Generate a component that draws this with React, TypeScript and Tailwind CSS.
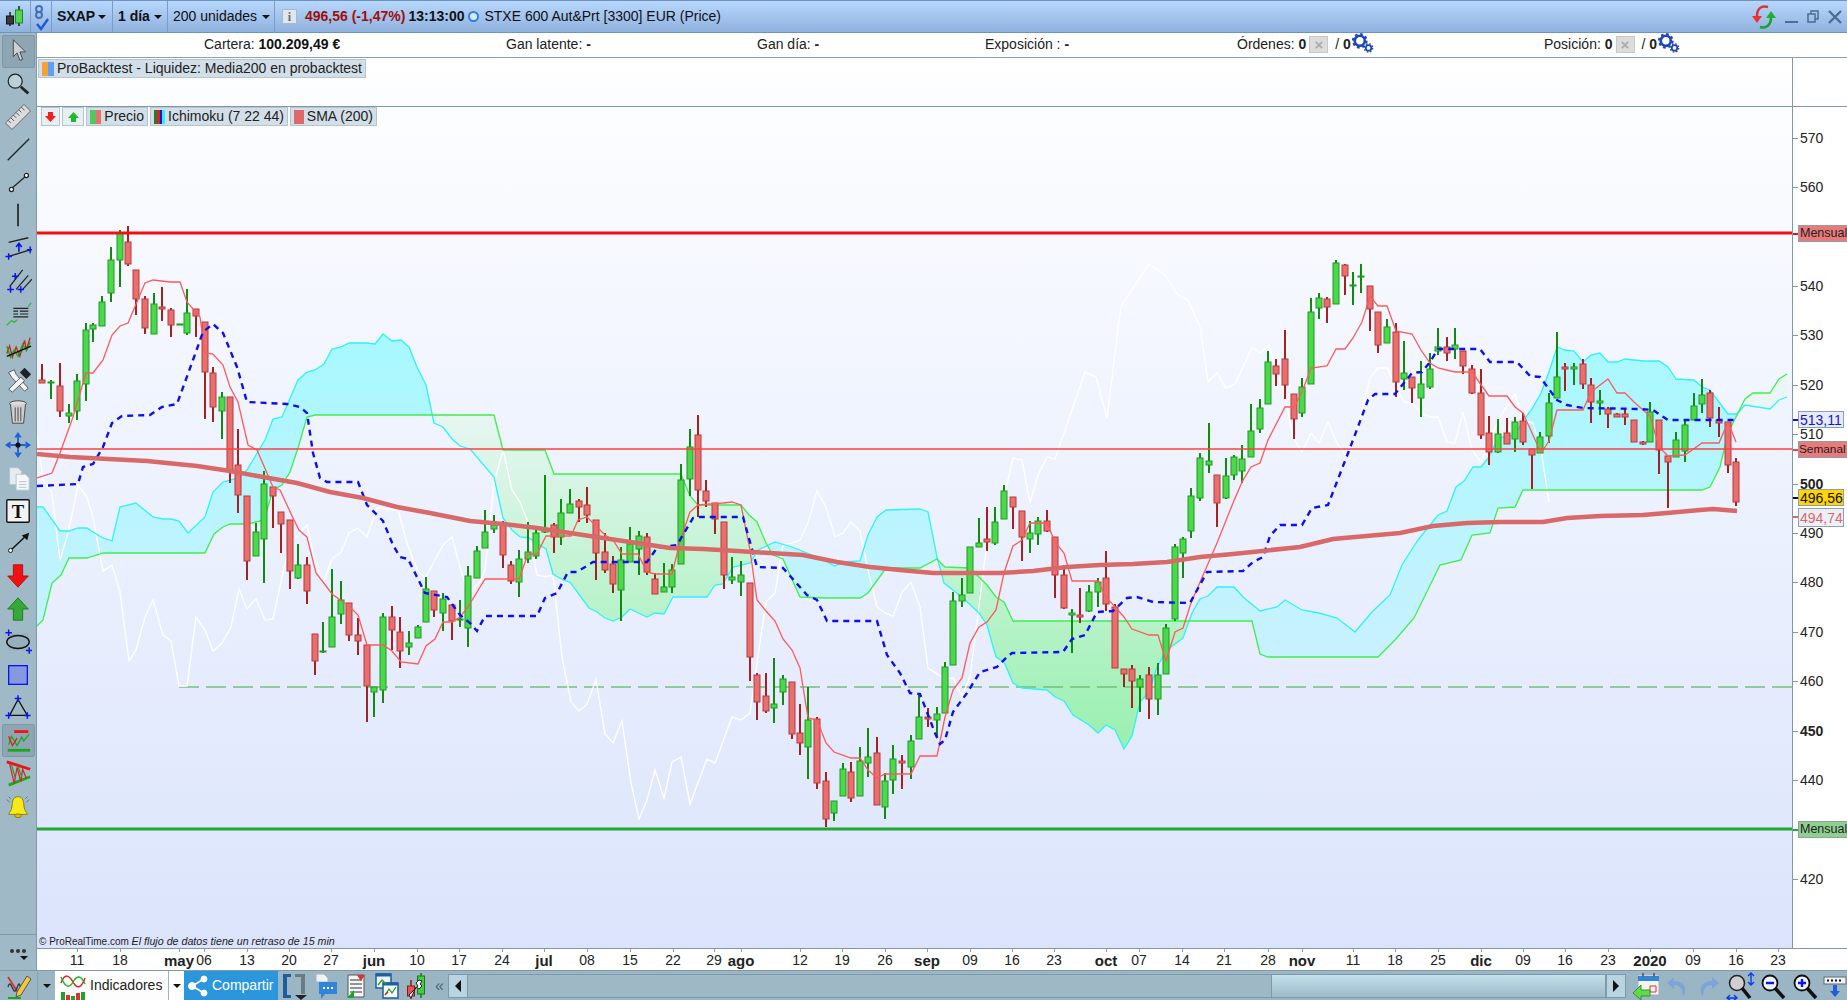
import React from "react";

// chart data is in page pixels, the svg viewBox below lines up with the page
const tenkan =
  "37,478 52,473 60,453 73,417 86,373 93,373 103,360 112,335 120,326 128,323 145,283 153,280 170,282 180,282 187,302 200,317 205,353 213,354 223,365 230,387 238,402 248,445 257,450 273,487 280,490 293,518 299,530 307,537 316,573 323,582 332,594 350,607 358,615 367,645 383,645 392,651 401,662 418,664 426,646 435,639 443,622 452,622 460,617 468,607 485,579 519,579 528,554 537,554 546,536 571,536 578,520 587,517 605,535 613,540 622,554 638,554 647,572 655,574 672,574 681,538 690,512 698,505 723,503 732,502 741,505 750,550 757,600 766,611 775,621 783,639 792,650 800,668 808,718 817,720 826,743 834,752 851,758 860,758 868,770 877,778 885,774 911,774 920,756 937,756 945,717 953,690 962,678 970,643 979,627 987,622 996,610 1004,573 1013,546 1022,540 1030,523 1047,523 1055,542 1064,553 1072,581 1098,581 1106,597 1124,617 1132,629 1149,635 1158,635 1166,661 1175,632 1183,628 1191,603 1217,543 1233,503 1242,482 1251,467 1260,463 1268,440 1285,407 1294,407 1302,392 1311,368 1327,366 1336,349 1345,349 1353,338 1362,322 1370,296 1378,306 1387,306 1396,331 1412,334 1421,350 1430,363 1438,368 1455,372 1472,372 1489,396 1507,396 1515,407 1523,413 1541,453 1549,441 1557,410 1583,410 1591,392 1608,379 1617,393 1625,393 1634,402 1650,416 1659,447 1668,456 1685,455 1702,443 1719,443 1728,422 1736,442";
const kijun =
  "37,486 78,484 83,467 93,464 103,447 112,423 122,416 150,415 162,407 177,404 193,360 203,332 213,324 223,333 237,367 247,402 287,404 300,407 307,413 313,453 320,478 327,482 358,482 367,505 383,521 393,545 400,557 408,559 425,593 447,597 460,615 470,623 477,631 485,616 537,616 545,598 557,593 568,572 577,572 593,562 647,562 657,548 677,545 693,518 700,517 743,517 757,567 783,568 807,595 817,600 827,621 877,621 887,655 900,673 910,693 920,694 935,733 940,744 945,740 953,712 967,693 980,672 997,667 1007,657 1012,653 1063,652 1072,639 1085,635 1097,612 1113,611 1127,598 1137,597 1153,602 1190,603 1207,572 1243,571 1253,562 1263,557 1270,536 1280,525 1302,525 1312,508 1328,505 1350,448 1368,400 1375,394 1395,394 1412,373 1422,372 1430,362 1438,349 1480,349 1490,362 1517,362 1530,376 1540,377 1557,400 1567,405 1583,408 1640,409 1653,410 1668,420 1737,420";
const chikou =
  "37,433 43,480 52,493 60,560 68,533 78,485 87,497 93,518 103,571 112,565 120,592 129,661 136,650 145,617 153,600 163,635 171,641 179,686 187,686 196,617 205,630 213,651 222,643 231,627 239,589 247,609 256,599 265,620 273,619 282,577 290,543 307,525 315,562 323,583 332,559 341,552 349,533 358,528 367,537 377,508 398,510 407,543 417,570 425,578 435,560 443,545 452,537 460,567 468,594 480,582 485,570 494,483 503,450 512,490 520,502 527,520 537,575 545,577 553,575 562,657 571,702 579,711 587,704 596,680 605,734 613,743 622,721 631,783 639,819 647,800 655,770 664,798 672,762 681,757 690,804 707,759 715,763 732,717 741,720 750,713 757,663 766,602 775,593 783,545 792,543 800,540 808,523 817,491 826,507 835,537 843,533 851,522 860,531 868,570 877,607 885,613 893,616 902,592 911,582 920,607 928,668 945,679 953,678 962,696 970,677 987,543 995,540 1004,497 1013,458 1022,460 1030,503 1038,475 1047,457 1055,459 1073,407 1085,372 1096,377 1107,418 1121,306 1149,264 1165,275 1178,295 1188,300 1200,327 1208,382 1217,373 1226,388 1235,384 1243,367 1252,347 1260,353 1269,345 1285,397 1293,437 1302,452 1311,433 1319,443 1328,422 1337,443 1346,456 1353,443 1362,410 1370,378 1378,368 1387,368 1404,402 1412,403 1421,413 1430,417 1438,417 1447,442 1455,443 1463,412 1472,450 1481,462 1489,443 1498,420 1515,394 1523,420 1533,423 1541,450 1549,502";
const senkouA =
  "37,507 43,507 60,531 69,531 78,528 87,528 93,532 103,538 112,541 120,507 136,503 153,517 163,519 171,519 179,521 188,533 205,517 213,492 223,482 238,478 247,470 265,440 273,419 282,417 298,380 307,372 315,370 324,364 332,349 341,347 349,343 367,343 375,344 383,334 392,341 401,340 409,347 417,367 426,385 434,423 443,427 452,439 460,446 470,449 494,477 503,518 512,530 520,537 529,538 546,549 553,574 563,580 570,582 589,608 597,612 605,618 613,621 622,617 630,609 647,617 655,613 664,614 673,597 707,597 715,585 723,584 733,567 750,563 758,550 775,542 792,547 817,557 835,566 843,562 860,561 868,535 877,517 886,510 920,509 928,512 937,557 944,583 962,597 979,613 987,625 996,657 1004,662 1013,683 1022,688 1047,690 1055,697 1064,701 1073,715 1089,725 1098,733 1106,725 1115,730 1124,749 1132,736 1140,702 1149,692 1157,667 1167,650 1183,638 1192,613 1200,599 1208,596 1217,587 1234,587 1243,597 1260,611 1277,607 1285,600 1302,610 1319,613 1337,618 1355,632 1372,612 1390,595 1402,565 1418,540 1438,515 1447,511 1456,487 1464,481 1473,467 1481,467 1489,457 1498,438 1515,435 1523,421 1532,409 1541,393 1549,372 1557,347 1565,350 1574,351 1583,362 1591,355 1600,353 1608,362 1617,362 1625,359 1643,361 1659,361 1668,367 1676,379 1694,380 1702,387 1710,390 1728,414 1737,414 1745,405 1770,409 1779,400 1787,397";
const senkouB =
  "37,626 43,620 52,583 61,575 69,558 87,558 103,553 205,553 214,534 223,527 230,524 248,524 264,520 273,490 282,485 290,472 298,448 307,417 315,415 494,415 503,450 545,450 554,474 681,474 690,496 698,505 741,505 749,515 757,522 766,543 773,555 783,559 800,597 826,598 860,598 868,593 886,568 920,568 937,559 945,567 970,568 987,585 996,597 1004,602 1013,621 1252,621 1260,654 1268,657 1378,657 1395,640 1414,618 1440,565 1461,560 1472,535 1490,533 1498,508 1515,507 1523,490 1702,490 1710,487 1720,467 1728,433 1745,399 1753,393 1770,393 1779,379 1787,374";
const sma =
  "37,454 70,457 147,461 197,466 230,471 263,477 297,483 330,492 363,498 397,507 430,513 470,521 503,524 537,528 570,533 603,538 637,543 670,548 703,549 737,551 770,553 803,555 837,562 870,567 900,570 933,573 967,573 1000,573 1033,571 1067,567 1100,565 1133,564 1167,562 1200,557 1233,554 1300,547 1333,539 1400,533 1433,526 1467,523 1500,522 1543,522 1567,518 1600,516 1643,515 1667,513 1700,510 1713,509 1737,511";

// x, high, body top, body bottom, low, 1 = up candle
const candles: number[][] = [
  [42,364,380,383,383,0],[51,380,382,383,399,1],[60,363,386,411,417,0],[69,404,413,416,423,1],[77,374,381,411,420,1],[86,323,330,384,401,1],[93,323,325,329,342,1],[102,296,302,326,326,1],[111,247,260,293,302,1],[120,230,233,260,287,1],[128,226,242,264,266,0],[136,270,270,299,315,0],[145,296,299,328,334,0],[154,293,304,334,334,1],[162,287,307,309,321,0],[171,308,310,325,337,0],[180,324,324,325,325,1],[187,289,313,333,335,1],[196,309,309,316,337,0],[205,322,322,372,419,0],[213,367,373,407,422,0],[222,392,397,411,439,1],[230,397,397,470,483,0],[238,429,465,495,513,0],[247,496,496,561,580,0],[256,523,532,556,556,1],[264,471,484,539,583,1],[273,487,487,496,528,0],[281,512,512,524,553,0],[290,520,520,571,589,0],[298,544,565,578,579,1],[307,557,565,591,604,0],[315,634,634,661,675,0],[323,622,651,652,653,1],[332,569,617,647,647,1],[341,581,600,614,624,1],[349,603,603,635,641,0],[358,618,635,641,655,0],[367,645,645,686,722,0],[374,687,687,692,717,1],[383,613,617,690,703,1],[392,606,617,630,650,0],[400,617,632,651,668,0],[409,631,643,647,655,1],[418,625,627,638,638,1],[426,577,589,622,622,1],[434,591,591,610,617,0],[443,593,599,613,631,1],[452,605,605,621,640,0],[460,600,619,620,627,1],[468,566,576,628,647,1],[477,546,551,578,578,1],
  [485,510,532,548,548,1],[494,515,525,529,533,1],[503,521,523,555,568,0],[511,561,565,581,584,0],[519,550,559,582,597,1],[528,522,552,559,563,1],[536,530,533,556,559,1],[545,475,530,532,533,1],[554,523,525,537,553,0],[561,499,513,537,545,1],[570,489,504,513,513,1],[579,499,501,507,522,0],[587,487,505,515,523,0],[596,520,520,553,580,0],[605,533,552,570,573,0],[613,556,564,584,593,0],[621,547,560,590,621,1],[630,527,544,562,562,1],[639,531,536,549,575,1],[647,533,537,572,575,0],[655,573,579,594,594,0],[664,563,587,592,592,1],[672,564,570,587,593,1],[681,464,480,564,564,1],[690,429,447,479,496,1],[698,415,435,490,517,0],[706,480,491,501,507,0],[715,503,503,519,534,0],[724,522,522,575,589,0],[732,557,577,580,584,1],[741,561,575,582,596,1],[750,583,583,657,681,0],[757,673,675,702,720,0],[766,673,696,711,713,0],[774,658,704,708,723,1],[783,675,679,692,705,1],[792,682,682,734,739,0],[800,704,733,743,755,0],[808,687,720,747,779,1],[817,717,719,783,789,0],[826,772,781,819,827,0],[834,801,801,813,821,1],[843,763,769,796,796,1],[851,762,772,798,802,0],[860,747,761,796,796,1],[868,728,757,763,777,1],[877,737,753,805,805,0],[885,773,781,807,819,1],[893,745,759,780,794,1],[902,755,761,763,789,0],[911,735,741,767,779,1],[919,695,717,739,739,1],
  [928,708,717,719,727,0],[937,707,714,720,737,1],[945,662,667,713,713,1],[953,592,601,665,665,1],[962,578,595,601,607,1],[970,547,547,593,593,1],[979,518,543,547,547,1],[987,507,539,542,551,0],[995,507,522,543,545,1],[1004,485,491,519,519,1],[1013,497,497,507,529,0],[1022,511,511,537,561,0],[1030,521,533,539,553,1],[1038,517,521,534,545,1],[1047,510,521,531,532,0],[1055,537,537,575,598,0],[1064,565,575,608,609,0],[1072,609,613,615,653,1],[1080,588,615,617,623,0],[1089,585,592,611,612,1],[1098,578,582,592,607,1],[1106,551,578,604,611,0],[1115,604,607,668,668,0],[1124,669,669,674,687,0],[1132,665,669,681,708,0],[1140,675,679,687,712,1],[1149,667,675,699,719,0],[1158,663,675,699,715,1],[1166,624,628,674,674,1],[1175,544,547,619,621,1],[1183,537,539,553,578,1],[1191,488,496,531,538,1],[1200,453,458,498,501,1],[1209,423,461,465,473,1],[1217,475,475,503,527,0],[1226,458,476,498,499,1],[1234,455,457,475,480,1],[1242,445,459,471,483,1],[1251,404,431,457,457,1],[1260,399,408,429,433,1],[1268,351,362,404,404,1],[1276,359,366,374,386,0],[1285,330,359,385,399,0],[1294,394,394,419,439,0],[1302,378,387,413,417,1],[1311,298,312,384,384,1],[1319,293,298,308,319,1],[1327,297,299,307,323,0],[1336,260,263,304,304,1],[1345,264,265,276,295,0],[1353,272,285,286,305,1],[1361,264,276,277,293,1],[1370,286,286,309,331,0],[1378,312,312,345,353,0],[1387,319,327,343,343,1],[1396,323,332,382,397,0],[1404,341,373,379,390,1],[1412,377,377,388,403,0],[1421,361,384,398,417,1],[1430,353,369,387,389,1],[1438,328,347,351,355,1],[1447,337,347,353,361,0],[1455,328,345,349,359,1],[1463,351,351,366,374,0],[1472,365,369,393,394,0],[1481,369,393,435,439,0],[1489,416,433,452,465,0],[1498,419,434,452,453,1],[1507,418,433,444,444,0],[1515,417,422,439,452,1],[1523,413,421,442,445,0],[1532,449,449,455,489,0],[1540,432,437,453,453,1],[1549,393,403,436,443,1],
  [1557,332,377,398,398,1],[1565,363,367,369,391,0],[1574,363,367,369,385,1],[1583,359,364,384,389,0],[1591,378,385,402,423,0],[1600,390,401,403,415,1],[1608,407,409,414,428,0],[1617,413,414,417,417,0],[1625,409,414,417,425,0],[1634,420,420,442,442,0],[1643,441,442,444,445,0],[1650,402,412,442,442,1],[1659,420,420,450,474,0],[1668,456,456,462,508,0],[1676,432,440,457,457,1],[1685,420,425,451,462,1],[1694,393,406,420,420,1],[1702,379,395,404,413,1],[1710,390,393,418,427,0],[1719,407,420,423,437,0],[1728,422,422,465,473,0],[1736,458,462,502,506,0],
];

const dates: [string, number, boolean][] = [
  ["11",77,false],["18",120,false],["may",179,true],["06",204,false],["13",247,false],["20",289,false],["27",331,false],["jun",374,true],["10",417,false],["17",459,false],["24",502,false],["jul",544,true],["08",587,false],["15",630,false],["22",673,false],["29",714,false],["ago",741,true],["12",800,false],["19",842,false],["26",885,false],["sep",927,true],["09",970,false],["16",1012,false],["23",1054,false],["oct",1106,true],["07",1139,false],["14",1182,false],["21",1224,false],["28",1268,false],["nov",1302,true],["11",1353,false],["18",1395,false],["25",1438,false],["dic",1481,true],["09",1523,false],["16",1565,false],["23",1608,false],["2020",1650,true],["09",1693,false],["16",1736,false],["23",1778,false],
];

const prices = [570,560,540,530,520,510,500,490,480,470,460,450,440,420];
const priceY = (v: number) => 286 + (540 - v) * 4.94;

function parse(s: string) {
  return s.split(" ").map((p) => p.split(",").map(Number));
}

function at(line: number[][], x: number) {
  for (let i = 1; i < line.length; i++) {
    if (x <= line[i][0]) {
      const [x0, y0] = line[i - 1];
      const [x1, y1] = line[i];
      return y0 + ((y1 - y0) * (x - x0)) / (x1 - x0 || 1);
    }
  }
  return line[line.length - 1][1];
}

// splits the cloud into runs where A is over B (cyan) and B over A (green)
function cloudRuns() {
  const a = parse(senkouA);
  const b = parse(senkouB);
  const runs: { up: boolean; d: string }[] = [];
  let pts: number[][] = [];
  let up = at(a, 37) <= at(b, 37);
  const flush = () => {
    if (pts.length > 1) {
      const top = pts.map((p) => `${p[0]},${p[1]}`).join(" L");
      const bot = [...pts].reverse().map((p) => `${p[0]},${p[2]}`).join(" L");
      runs.push({ up, d: `M${top} L${bot} Z` });
    }
  };
  for (let x = 37; x <= 1787; x++) {
    const ya = at(a, x);
    const yb = at(b, x);
    const u = ya <= yb;
    if (u !== up) {
      pts.push([x, ya, yb]);
      flush();
      pts = [];
      up = u;
    }
    pts.push([x, ya, yb]);
  }
  flush();
  return runs;
}

function Chart() {
  return (
    <svg className="absolute inset-0" width={1755} height={841} viewBox="37 107 1755 841">
      <defs>
        <linearGradient id="cyanFill" gradientUnits="userSpaceOnUse" x1="0" y1="340" x2="0" y2="700">
          <stop offset="0" stopColor="#a8f8ff" />
          <stop offset="1" stopColor="#cdf0ff" />
        </linearGradient>
        <linearGradient id="greenFill" gradientUnits="userSpaceOnUse" x1="0" y1="400" x2="0" y2="750">
          <stop offset="0" stopColor="#eaf6f5" />
          <stop offset="1" stopColor="#98f0ae" />
        </linearGradient>
      </defs>
      {cloudRuns().map((r, i) => (
        <path key={i} d={r.d} fill={r.up ? "url(#cyanFill)" : "url(#greenFill)"} />
      ))}
      <line x1="179" y1="687" x2="1792" y2="687" stroke="#74c07c" strokeWidth="1.5" strokeDasharray="20 7" />
      <polyline points={chikou} fill="none" stroke="#ffffff" strokeWidth="1.4" />
      <polyline points={senkouA} fill="none" stroke="#2ff0ff" strokeWidth="1.3" />
      <polyline points={senkouB} fill="none" stroke="#3cf04c" strokeWidth="1.3" />
      {candles.map(([x, hi, top, bot, lo, up]) => (
        <g key={x}>
          <line x1={x} y1={hi} x2={x} y2={lo} stroke={up ? "#128a12" : "#a62222"} strokeWidth="2" />
          <rect x={x - 3} y={top} width="6" height={Math.max(bot - top, 1)} fill={up ? "#4cd84c" : "#e96f6f"} stroke={up ? "#1f9a1f" : "#b53a3a"} />
        </g>
      ))}
      <polyline points={tenkan} fill="none" stroke="#ff5a5a" strokeWidth="1.3" />
      <polyline points={kijun} fill="none" stroke="#0f0fee" strokeWidth="2.4" strokeDasharray="6 5" />
      <line x1="37" y1="449" x2="1792" y2="449" stroke="#ff3f3f" strokeWidth="1.4" />
      <polyline points={sma} fill="none" stroke="#d96868" strokeWidth="4.5" />
      <line x1="37" y1="233" x2="1792" y2="233" stroke="#f01010" strokeWidth="3" />
      <line x1="37" y1="829" x2="1792" y2="829" stroke="#22a832" strokeWidth="3" />
    </svg>
  );
}

function Plus({ x, y }: { x: number; y: number }) {
  return <path d={`M${x - 3.5} ${y}H${x + 3.5}M${x} ${y - 3.5}V${y + 3.5}`} stroke="#0a14ee" strokeWidth="1.6" />;
}

const tools: React.ReactNode[] = [
  <path d="M10 3V21L14 17L17 25L20 24L17 16L23 16Z" fill="#c9d2d6" stroke="#444" />,
  <g fill="none" stroke="#222"><circle cx="12" cy="12" r="7.5" strokeWidth="1.3" fill="#bcd0da" /><path d="M18 18L26 25" strokeWidth="3" /></g>,
  <g transform="rotate(-45 15 15)"><rect x="1" y="10" width="28" height="10" fill="#dcdcdc" stroke="#666" /><path d="M5 10v4M9 10v5M13 10v4M17 10v5M21 10v4M25 10v5" stroke="#555" /></g>,
  <path d="M4 26L27 3" stroke="#222" strokeWidth="1.4" />,
  <g stroke="#222" fill="#fff" strokeWidth="1.3"><path d="M9 20L23 8" /><circle cx="8" cy="22" r="2.2" /><circle cx="24" cy="7" r="2.2" /></g>,
  <path d="M15 3V27" stroke="#222" strokeWidth="1.8" />,
  <g><path d="M5 9L26 4M5 24L28 17" stroke="#222" strokeWidth="1.5" /><path d="M16 19V11M13 14L16 10L19 14" stroke="#0a14ee" strokeWidth="1.8" fill="none" /><Plus x={5} y={24} /><Plus x={28} y={17} /></g>,
  <g><path d="M6 21L20 3M13 24L26 9M20 24L30 13" stroke="#222" strokeWidth="1.3" /><Plus x={12} y={10} /><Plus x={7} y={24} /><Plus x={18} y={24} /></g>,
  <g><path d="M3 27L8 22L11 24L17 18L24 10L29 3" fill="none" stroke="#2cc02c" strokeWidth="1.5" /><rect x="9" y="7" width="17" height="14" fill="#9fb9c6" /><path d="M10 9H26M10 12h5M17 12h9M10 15h5M17 15h9M10 18h16" stroke="#222" strokeWidth="1.3" /></g>,
  <g fill="none" strokeWidth="1.4"><path d="M3 22L6 14L9 26L13 15L17 25L22 8L24 18L28 5" stroke="#d02020" /><path d="M3 14L7 26L11 18L15 25L20 12L24 19L28 10" stroke="#18a818" /><path d="M3 25L29 14" stroke="#111" strokeWidth="1.6" /></g>,
  <g><path d="M5 8L11 5L13 10L26 25L22 28L8 13Z" fill="#f4f4f4" stroke="#555" /><path d="M5 26L18 13L22 17L9 29Z" fill="#f4f4f4" stroke="#555" /><path d="M17 8L22 3L29 10L24 15Z" fill="#222" /></g>,
  <g stroke="#444"><ellipse cx="15" cy="6" rx="9" ry="3" fill="#ddd" /><path d="M7 7L9 27H21L23 7" fill="#cfcfcf" /><path d="M12 10V25M15 10V25M18 10V25" /></g>,
  <g fill="#1f5fd8"><path d="M15 1L19 7H11ZM15 29L11 23H19ZM1 15L7 11V19ZM29 15L23 19V11Z" /><path d="M7 14h16v2H7zM14 7h2v16h-2z" /><circle cx="15" cy="15" r="2.8" fill="#111" /></g>,
  <g fill="#e4edf1" stroke="#b4c4cc"><path d="M6 4H15L19 8V22H6Z" /><path d="M13 11H23L27 15V28H13Z" fill="#f4f8fa" /><path d="M16 19h8M16 22h8M16 25h8" /></g>,
  <g><rect x="3" y="3" width="24" height="24" rx="1" fill="#f2f2f2" stroke="#111" strokeWidth="1.5" /><text x="15" y="22" textAnchor="middle" fontFamily="Liberation Serif, serif" fontWeight="700" fontSize="20" fill="#111">T</text></g>,
  <g><path d="M8 22L24 7" stroke="#111" strokeWidth="1.6" /><path d="M27 4L25 12L19 7Z" fill="#111" /><circle cx="7" cy="23" r="2.2" fill="#fff" stroke="#111" /></g>,
  <path d="M10 3H20V15H26L15 27L4 15H10Z" fill="#f01212" stroke="#b01010" />,
  <path d="M10 27H20V15H26L15 3L4 15H10Z" fill="#36a838" stroke="#1c7c1c" />,
  <g><rect x="5" y="6" width="21" height="18" fill="#98b0be" /><ellipse cx="15" cy="15" rx="12" ry="7" fill="none" stroke="#111" strokeWidth="1.5" /><Plus x={5} y={5} /><Plus x={27} y={24} /></g>,
  <rect x="5" y="5" width="20" height="20" fill="#8499df" stroke="#0a14ee" strokeWidth="1.4" />,
  <g><path d="M15 7L6 24H25Z" fill="none" stroke="#111" strokeWidth="1.4" /><Plus x={15} y={6} /><Plus x={5} y={24} /><Plus x={25} y={24} /></g>,
  <g fill="none"><path d="M11 6H26" stroke="#f01212" strokeWidth="3" /><path d="M4 26H28" stroke="#1aa81a" strokeWidth="3" /><path d="M5 20L8 11L14 21L19 12L21 16L27 9" stroke="#1aa81a" strokeWidth="1.4" /><path d="M5 11L9 21L14 13" stroke="#e02020" strokeWidth="1.4" /></g>,
  <g fill="none"><path d="M3 3L28 11" stroke="#f01212" strokeWidth="3" /><path d="M5 28L28 19" stroke="#1aa81a" strokeWidth="3" /><path d="M6 5L11 26L14 9L18 24L20 11L24 21" stroke="#e02020" strokeWidth="1.3" /><path d="M8 6L12 20M15 8L19 19" stroke="#1aa81a" strokeWidth="1.3" /></g>,
  <g><path d="M15 5C9 5 9 11 8.500 16C8 20 6 21 5 24H25C24 21 22 20 21.500 16C21 11 21 5 15 5Z" fill="#f7ea1a" stroke="#8a7a10" /><ellipse cx="15" cy="25.500" rx="3.500" ry="2" fill="#d8c010" stroke="#8a7a10" /><path d="M3 8L6 11M27 8L24 11M5 5L7 7M25 5L23 7" stroke="#667" /></g>,
];

function Sidebar() {
  return (
    <div className="flex w-[37px] flex-col items-center border-r border-[#7f99a8] bg-[#9fb9c6] pt-[2px]">
      {tools.map((t, i) => (
        <div
          key={i}
          className={
            "flex h-[32.800px] w-[33px] items-center justify-center rounded-[2px] " +
            (i === 0 || i === 21 ? "border border-[#7f97a5] bg-[#8ea6b3]" : "")
          }
        >
          <svg width="28" height="28" viewBox="0 0 30 30">{t}</svg>
        </div>
      ))}
      <div className="mt-auto flex h-[36px] w-full flex-col items-center border-t border-[#7f99a8] pt-[14px]">
        <div className="flex gap-[2px]">
          <span className="h-[4px] w-[4px] rounded-full bg-[#333]" />
          <span className="h-[4px] w-[4px] rounded-full bg-[#333]" />
          <span className="h-[4px] w-[4px] rounded-full bg-[#333]" />
        </div>
        <Caret className="mt-[3px] ml-[12px]" />
      </div>
    </div>
  );
}

function Caret({ className = "" }: { className?: string }) {
  return <span className={"inline-block h-0 w-0 border-x-[4px] border-t-[4px] border-x-transparent border-t-[#111] " + className} />;
}

function Gears() {
  return (
    <svg width="23" height="22" viewBox="0 0 21 20" className="-mt-[3px]">
      <circle cx="8" cy="8" r="4.600" fill="none" stroke="#1c48b8" strokeWidth="2.400" />
      <circle cx="8" cy="8" r="6.200" fill="none" stroke="#1c48b8" strokeWidth="2" strokeDasharray="2.400 2.500" />
      <circle cx="16" cy="14.500" r="2.500" fill="none" stroke="#1c48b8" strokeWidth="1.600" />
      <circle cx="16" cy="14.500" r="3.800" fill="none" stroke="#1c48b8" strokeWidth="1.200" strokeDasharray="1.500 1.500" />
    </svg>
  );
}

function GreyBox() {
  return (
    <span className="relative mx-[3px] inline-flex h-[17px] w-[19px] items-center justify-center border border-[#c8c8c8] bg-[#dcdcdc] text-[15px] font-bold leading-none text-[#ababab]">
      ×
    </span>
  );
}

function TitleBar() {
  return (
    <div className="flex h-[33px] items-center border-y border-[#6f93bf] bg-linear-to-b from-[#b7d7fc] to-[#8fb2de] text-[14px] text-[#111]">
      <div className="flex h-full w-[31px] items-center justify-center border-r border-[#7c9cc6]">
        <svg width="22" height="24" viewBox="0 0 22 24">
          <path d="M6 7V21M15 1V21" stroke="#222" strokeWidth="1.500" />
          <rect x="2.500" y="11" width="7" height="8" fill="#3a3a3a" stroke="#111" />
          <rect x="11.500" y="5" width="7" height="13" fill="#52d84a" stroke="#1f8a1f" />
        </svg>
      </div>
      <div className="flex h-full w-[21px] items-center justify-center border-r border-[#7c9cc6]">
        <svg width="18" height="28" viewBox="0 0 18 28" fill="none">
          <path d="M7 3C3 3 3 9 7 9C11 9 11 3 7 3ZM7 9C3 9 3 15 7 15C11 15 11 9 7 9Z" stroke="#4a6fb0" strokeWidth="2" />
          <path d="M5 21L9 26L16 16" stroke="#1c58d8" strokeWidth="2.400" />
        </svg>
      </div>
      <div className="flex h-full w-[61px] items-center justify-between border-r border-[#7c9cc6] pl-[5px] pr-[6px] font-bold">
        SXAP <Caret />
      </div>
      <div className="flex h-full w-[55px] items-center justify-between border-r border-[#7c9cc6] pl-[5px] pr-[5px] font-bold">
        1 día <Caret />
      </div>
      <div className="flex h-full w-[107px] items-center justify-between border-r border-[#7c9cc6] pl-[5px] pr-[4px]">
        200 unidades <Caret />
      </div>
      <div className="ml-[7px] flex h-[15px] w-[15px] items-center justify-center border border-[#aab8c8] bg-[#dfe6ec] font-['Liberation_Serif',serif] text-[12px] font-bold text-[#667]">
        i
      </div>
      <span className="ml-[8px] font-bold text-[#9c1010]">496,56 (-1,47%)</span>
      <span className="ml-[3px] font-bold">13:13:00</span>
      <span className="ml-[4px] h-[11px] w-[11px] rounded-full border-2 border-[#2f7fe0] bg-[#d7ebff]" />
      <span className="ml-[5px]">STXE 600 Aut&amp;Prt [3300] EUR (Price)</span>
      <div className="ml-auto flex items-center gap-[8px] pr-[5px]">
        <svg width="26" height="26" viewBox="0 0 26 26" fill="none">
          <path d="M17 3C10 1 6 5 6 12" stroke="#e03030" strokeWidth="2.500" />
          <path d="M1 12H11L6 19Z" fill="#ef3030" />
          <path d="M9 23C16 25 20 20 20 14" stroke="#20a030" strokeWidth="2.500" />
          <path d="M15 14H25L20 7Z" fill="#22b030" />
        </svg>
        <span className="mt-[10px] h-[2px] w-[13px] bg-[#4a6f90]" />
        <svg width="12" height="13" viewBox="0 0 12 13" fill="none" stroke="#4a6f90" strokeWidth="1.500" className="ml-[1px]">
          <rect x="1" y="4" width="7" height="8" />
          <path d="M4 4V1H11V9H8" />
        </svg>
        <svg width="14" height="14" viewBox="0 0 14 14" stroke="#4a6f90" strokeWidth="2.400" className="ml-[1px]">
          <path d="M1 1L13 13M13 1L1 13" />
        </svg>
      </div>
    </div>
  );
}

function InfoBar() {
  return (
    <div className="flex h-[25px] items-center border-b border-[#8ba1ae] bg-white pb-[2px] pl-[167px] text-[14px] text-[#222]">
      <div className="w-[302px]">
        Cartera: <b className="text-[#111]">100.209,49 €</b>
      </div>
      <div className="w-[251px]">
        Gan latente: <b>-</b>
      </div>
      <div className="w-[228px]">
        Gan día: <b>-</b>
      </div>
      <div className="w-[252px]">
        Exposición : <b>-</b>
      </div>
      <div className="flex w-[307px] items-center">
        Órdenes:&nbsp;<b>0</b>
        <GreyBox />
        &nbsp;/&nbsp;<b>0</b>
        <Gears />
      </div>
      <div className="flex items-center">
        Posición:&nbsp;<b>0</b>
        <GreyBox />
        &nbsp;/&nbsp;<b>0</b>
        <Gears />
      </div>
    </div>
  );
}

function Tab({ children, className = "" }: { children: React.ReactNode; className?: string }) {
  return (
    <div className={"flex h-[19px] items-center gap-[3px] whitespace-nowrap border border-[#b5c5d0] bg-[#d2dfe8] px-[3px] text-[14px] text-[#222] " + className}>
      {children}
    </div>
  );
}

function AxisTag({ y, className, children, tick }: { y: number; className: string; children: React.ReactNode; tick: string }) {
  return (
    <>
      <div className="absolute left-0 h-[2px] w-[6px]" style={{ top: y - 107, backgroundColor: tick }} />
      <div className={"absolute left-[5px] flex h-[17px] items-center overflow-hidden whitespace-nowrap border border-[#8fa0ad] pl-[1px] leading-none " + className} style={{ top: y - 107 - 8 }}>
        {children}
      </div>
    </>
  );
}

function PriceAxis() {
  return (
    <div className="relative w-[55px] overflow-hidden border-l border-[#7f99a8] bg-white">
      {prices.map((p) => (
        <div key={p}>
          <div className="absolute left-0 h-px w-[5px] bg-[#7f99a8]" style={{ top: priceY(p) - 107 }} />
          <div
            className={"absolute left-[7px] text-[14px] leading-none text-[#222] " + (p === 500 || p === 450 ? "font-bold text-[#111]" : "")}
            style={{ top: priceY(p) - 107 - 7 }}
          >
            {p}
          </div>
        </div>
      ))}
      <AxisTag y={233} tick="#f01010" className="w-[50px] bg-[#e97a7a] text-[12.500px] text-[#222]">Mensual</AxisTag>
      <AxisTag y={419} tick="#1010e0" className="w-[46px] bg-[#e6ecfa] text-[14px] text-[#1414e0]">513,11</AxisTag>
      <AxisTag y={449} tick="#ff3f3f" className="w-[50px] bg-[#e97a7a] !pl-0 text-[11.800px] text-[#222]">Semanal</AxisTag>
      <AxisTag y={497} tick="#111" className="w-[46px] bg-[#ffd400] text-[14px] text-[#111]">496,56</AxisTag>
      <AxisTag y={516} tick="#d96868" className="h-[19px] w-[46px] bg-[#eceff6] text-[14px] text-[#d96868]">494,74</AxisTag>
      <AxisTag y={829} tick="#22a832" className="w-[50px] bg-[#8fd08f] text-[12.500px] text-[#222]">Mensual</AxisTag>
    </div>
  );
}

function DateAxis() {
  return (
    <div className="relative h-[22px] border-t border-[#7f99a8] bg-white">
      {dates.map(([label, x, bold]) => (
        <div key={label + x}>
          <div className="absolute top-0 h-[3px] w-px bg-[#8ba1ae]" style={{ left: x - 37 }} />
          <div
            className={"absolute top-[4px] -translate-x-1/2 leading-none text-[#222] " + (bold ? "text-[15px] font-bold text-[#111]" : "text-[14px]")}
            style={{ left: x - 37 }}
          >
            {label}
          </div>
        </div>
      ))}
    </div>
  );
}

function Ico({ w = 26, children }: { w?: number; children: React.ReactNode }) {
  return (
    <svg width={w} height="28" viewBox={`0 0 ${w} 28`} fill="none" className="shrink-0">
      {children}
    </svg>
  );
}

function BottomBar() {
  return (
    <div className="flex h-[30px] items-center border-t border-[#7f99a8] bg-[#9ab6c4] text-[14px]">
      <div className="flex w-[38px] justify-center border-r border-[#88a3b1]">
        <Ico w={28}>
          <path d="M3 5L14 22" stroke="#e02020" strokeWidth="1.500" />
          <path d="M3 15C6 5 8 24 11 18S14 8 16 18" stroke="#333" strokeWidth="1.300" />
          <path d="M3 26H16" stroke="#1aa81a" strokeWidth="2" />
          <path d="M12 20L22 4L26 7L16 23L11 25Z" fill="#f3c93a" stroke="#555" />
        </Ico>
      </div>
      <div className="flex w-[17px] justify-center">
        <Caret />
      </div>
      <div className="flex h-full w-[113px] items-center gap-[4px] bg-[#fdfdfd] pl-[5px]">
        <Ico w={26}>
          <path d="M1 11C5 1 9 3 13 10S21 17 25 6" stroke="#e02020" strokeWidth="1.500" />
          <path d="M1 5C5 15 9 17 13 10S21 3 25 12" stroke="#28b028" strokeWidth="1.500" />
          <path d="M1 20h4v8H1zM11 24h4v4h-4zM21 20h4v8h-4z" fill="#28a028" />
          <path d="M6 23h4v5H6zM16 21h4v7h-4z" fill="#e03030" />
        </Ico>
        <span className="text-[#222]">Indicadores</span>
      </div>
      <div className="flex h-full w-[16px] items-center justify-center border-l border-[#9ab6c4] bg-[#fdfdfd]">
        <Caret />
      </div>
      <div className="flex h-full w-[94px] items-center gap-[4px] bg-[#2c96dc] pl-[4px] text-white">
        <svg width="20" height="22" viewBox="0 0 20 22" fill="white" stroke="white">
          <path d="M4 11L16 4M4 11L16 18" strokeWidth="1.800" />
          <circle cx="4" cy="11" r="3.500" />
          <circle cx="16" cy="4" r="3" />
          <circle cx="16" cy="18" r="3" />
        </svg>
        Compartir
      </div>
      <div className="ml-[3px] flex items-center gap-[6px]">
        <Ico w={27}>
          <path d="M10 2H2V26H10V23H6V5H10Z" fill="#1d5f9c" />
          <path d="M14 2H24V22H20V5H14Z" fill="#6b7b86" />
          <path d="M14 23H26L20 28Z" fill="#222" />
        </Ico>
        <Ico w={24}>
          <path d="M2 2H10L14 6V10H2Z" fill="#eef3f6" stroke="#aab" />
          <path d="M5 10H23V22H11L7 27V22H5Z" fill="#2f86d8" />
          <path d="M9 16h2M13 16h2M17 16h2" stroke="#fff" strokeWidth="2" />
        </Ico>
        <Ico w={24}>
          <path d="M4 3H20V25H4Z" fill="#f4f6f7" stroke="#555" />
          <path d="M6 8h12M6 12h12M6 16h12M6 20h12" stroke="#333" />
          <path d="M13 3H21L17 9Z" fill="#e03030" />
          <path d="M3 26L10 18V26Z" fill="#28a028" />
        </Ico>
        <Ico w={25}>
          <rect x="2" y="2" width="15" height="14" fill="#eaf2fa" stroke="#1d5f9c" strokeWidth="1.500" />
          <rect x="9" y="11" width="15" height="15" fill="#f4f8fc" stroke="#1d5f9c" strokeWidth="1.500" />
          <path d="M2 3H17M9 12H24" stroke="#1d5f9c" strokeWidth="3" />
          <path d="M4 13L8 8L12 12M11 23L15 17L18 21L22 15" stroke="#28a028" strokeWidth="1.300" />
          <path d="M11 23L14 20" stroke="#e02020" strokeWidth="1.300" />
        </Ico>
        <Ico w={22}>
          <path d="M16 1V26" stroke="#177a17" strokeWidth="1.500" />
          <rect x="12.500" y="4" width="7" height="18" fill="#3fd03f" stroke="#177a17" />
          <path d="M6 8V27" stroke="#8a1a1a" strokeWidth="1.500" />
          <rect x="2.500" y="14" width="7" height="10" fill="#ee5050" stroke="#8a1a1a" />
          <path d="M4 23L13 14L11 11L14 8L17 9L15 12L17 14L14 17L11 15L6 26Z" fill="#f8f8f8" stroke="#222" />
        </Ico>
        <span className="ml-[2px] text-[16px] leading-none text-[#50677a]">«</span>
      </div>
      <div className="ml-[4px] flex h-[24px] flex-1 items-center">
        <div className="flex h-full w-[20px] items-center justify-center border border-[#7f99a8] bg-[#b8d4e0]">
          <span className="h-0 w-0 border-y-[6px] border-r-[6px] border-y-transparent border-r-[#111]" />
        </div>
        <div className="h-full w-[803px] border-y border-[#7f99a8] bg-[#9fb8c5]" />
        <div className="h-full flex-1 border border-[#7f99a8] bg-linear-to-b from-[#c2dfea] to-[#9cbac8]" />
        <div className="flex h-full w-[20px] items-center justify-center border border-[#7f99a8] bg-[#b8d4e0]">
          <span className="h-0 w-0 border-y-[6px] border-l-[6px] border-y-transparent border-l-[#111]" />
        </div>
      </div>
      <div className="ml-[6px] flex items-center gap-[4px]">
        <Ico w={28}>
          <rect x="6" y="3" width="21" height="20" fill="#f4f4f4" stroke="#aab" />
          <path d="M6 4H27V9H6Z" fill="#2f86d8" />
          <path d="M11 1V5M22 1V5" stroke="#667" strokeWidth="2" />
          <path d="M18 14H24V20H18Z" fill="none" stroke="#e03030" />
          <path d="M1 21L9 13V18H18V24H9V28Z" fill="#63d84a" stroke="#2a9a2a" />
        </Ico>
        <Ico w={27} >
          <path d="M10 5L3 11L10 17V13C16 13 19 17 19 25C24 17 21 9 10 9Z" fill="#7ea3d8" />
        </Ico>
        <Ico w={27}>
          <path d="M17 5L24 11L17 17V13C11 13 8 17 8 25C3 17 6 9 17 9Z" fill="#7ea3d8" />
        </Ico>
        <Ico w={29}>
          <circle cx="11" cy="11" r="7.500" fill="#cfcfcf" stroke="#222" strokeWidth="1.500" />
          <path d="M16 16L24 26" stroke="#111" strokeWidth="3.500" />
          <path d="M25 1V13M22 4L25 1L28 4M22 10L25 13L28 10M1 26H11M4 23L1 26L4 28M8 23L11 26L8 28" stroke="#0a3cf0" strokeWidth="1.400" />
        </Ico>
        <Ico w={28}>
          <circle cx="11" cy="11" r="7.500" fill="#eef2f5" stroke="#111" strokeWidth="1.800" />
          <path d="M7 11H15" stroke="#0a14ee" strokeWidth="2.400" />
          <path d="M16 16L25 26" stroke="#111" strokeWidth="3.500" />
        </Ico>
        <Ico w={28}>
          <circle cx="11" cy="11" r="7.500" fill="#eef2f5" stroke="#111" strokeWidth="1.800" />
          <path d="M7 11H15M11 7V15" stroke="#0a14ee" strokeWidth="2.400" />
          <path d="M16 16L25 26" stroke="#111" strokeWidth="3.500" />
        </Ico>
        <Ico w={24}>
          <rect x="1" y="5" width="22" height="7" fill="#eef2f5" stroke="#667" />
          <path d="M4 8.500h2M8 8.500h2M12 8.500h2M16 8.500h2" stroke="#111" strokeWidth="2" />
          <path d="M10 13h4v6h3l-5 6-5-6h3z" fill="#1f5fd8" />
        </Ico>
      </div>
    </div>
  );
}

export default function App() {
  return (
    <div className="flex h-[1000px] w-[1847px] flex-col overflow-hidden bg-white font-['Liberation_Sans',Arial,sans-serif]">
      <TitleBar />
      <div className="flex h-[937px]">
        <Sidebar />
        <div className="flex w-[1810px] flex-col">
          <InfoBar />
          <div className="flex h-[49px]">
            <div className="w-[1755px] border-b border-[#7f99a8] bg-linear-to-b from-white to-[#fcfdff] pl-[1px] pt-[1px]">
              <Tab className="w-[328px]">
                <span className="flex h-[14px] w-[14px]">
                  <span className="w-1/2 bg-[#f8a030]" />
                  <span className="w-1/2 bg-[#5f9ff5]" />
                </span>
                ProBacktest - Liquidez: Media200 en probacktest
              </Tab>
            </div>
            <div className="flex-1 border-b border-l border-[#7f99a8] bg-white" />
          </div>
          <div className="flex h-[841px]">
            <div className="relative w-[1755px] bg-linear-to-b from-[#fcfdff] to-[#dbe4fc]">
              <Chart />
              <div className="absolute left-[4px] top-0 flex gap-[2px]">
                <Tab className="w-[19px] justify-center !bg-[#e8eff3] !px-0">
                  <svg width="13" height="14" viewBox="0 0 13 14"><path d="M6.500 12L1 6H4V2H9V6H12Z" fill="#ee2020" /></svg>
                </Tab>
                <Tab className="w-[22px] justify-center !bg-[#e8eff3] !px-0">
                  <svg width="13" height="14" viewBox="0 0 13 14"><path d="M6.500 2L1 8H4V12H9V8H12Z" fill="#1fb82f" /></svg>
                </Tab>
                <Tab className="w-[62px]">
                  <span className="flex h-[14px] w-[15px]">
                    <span className="w-1/2 bg-[#4fc85f]" />
                    <span className="w-1/2 bg-[#e86f6f]" />
                  </span>
                  Precio
                </Tab>
                <Tab className="w-[138px]">
                  <span className="flex h-[14px] w-[12px]">
                    <span className="w-1/4 bg-[#2a7a2a]" />
                    <span className="w-1/4 bg-[#e02020]" />
                    <span className="w-1/4 bg-[#1414e0]" />
                    <span className="w-1/4 bg-[#2ff0ff]" />
                  </span>
                  Ichimoku (7 22 44)
                </Tab>
                <Tab className="w-[87px]">
                  <span className="h-[14px] w-[15px] bg-[#e06868]" />
                  SMA (200)
                </Tab>
              </div>
              <div className="absolute bottom-[1px] left-[2px] text-[10px] leading-none text-[#222]">
                © ProRealTime.com <i className="text-[10.700px]">El flujo de datos tiene un retraso de 15 min</i>
              </div>
            </div>
            <PriceAxis />
          </div>
          <DateAxis />
        </div>
      </div>
      <BottomBar />
    </div>
  );
}
